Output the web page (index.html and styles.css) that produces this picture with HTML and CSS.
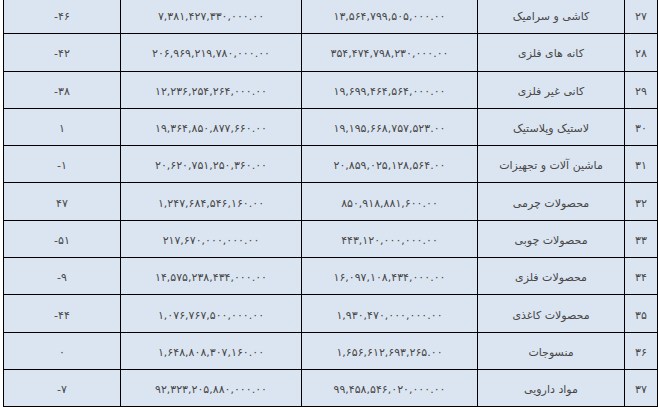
FILE: index.html
```html
<!DOCTYPE html>
<html lang="fa">
<head>
<meta charset="utf-8">
<link rel="stylesheet" href="styles.css">
</head>
<body>
<table class="grid" dir="rtl">
  <colgroup>
    <col class="c-num">
    <col class="c-name">
    <col class="c-v1">
    <col class="c-v2">
    <col class="c-pct">
  </colgroup>
  <tbody>
    <tr><td>۲۷</td><td>کاشی و سرامیک</td><td class="n">۱۳,۵۶۴,۷۹۹,۵۰۵,۰۰۰.۰۰</td><td class="n">۷,۳۸۱,۴۲۷,۳۳۰,۰۰۰.۰۰</td><td class="n">-۴۶</td></tr>
    <tr><td>۲۸</td><td>کانه های فلزی</td><td class="n">۳۵۴,۴۷۴,۷۹۸,۲۳۰,۰۰۰.۰۰</td><td class="n">۲۰۶,۹۶۹,۲۱۹,۷۸۰,۰۰۰.۰۰</td><td class="n">-۴۲</td></tr>
    <tr><td>۲۹</td><td>کانی غیر فلزی</td><td class="n">۱۹,۶۹۹,۴۶۴,۵۶۴,۰۰۰.۰۰</td><td class="n">۱۲,۲۳۶,۲۵۴,۲۶۴,۰۰۰.۰۰</td><td class="n">-۳۸</td></tr>
    <tr><td>۳۰</td><td>لاستیک وپلاستیک</td><td class="n">۱۹,۱۹۵,۶۶۸,۷۵۷,۵۲۳.۰۰</td><td class="n">۱۹,۳۶۴,۸۵۰,۸۷۷,۶۶۰.۰۰</td><td class="n">۱</td></tr>
    <tr><td>۳۱</td><td>ماشین آلات و تجهیزات</td><td class="n">۲۰,۸۵۹,۰۲۵,۱۲۸,۵۶۴.۰۰</td><td class="n">۲۰,۶۲۰,۷۵۱,۲۵۰,۳۶۰.۰۰</td><td class="n">-۱</td></tr>
    <tr><td>۳۲</td><td>محصولات چرمی</td><td class="n">۸۵۰,۹۱۸,۸۸۱,۶۰۰.۰۰</td><td class="n">۱,۲۴۷,۶۸۴,۵۴۶,۱۶۰.۰۰</td><td class="n">۴۷</td></tr>
    <tr><td>۳۳</td><td>محصولات چوبی</td><td class="n">۴۴۳,۱۲۰,۰۰۰,۰۰۰.۰۰</td><td class="n">۲۱۷,۶۷۰,۰۰۰,۰۰۰.۰۰</td><td class="n">-۵۱</td></tr>
    <tr><td>۳۴</td><td>محصولات فلزی</td><td class="n">۱۶,۰۹۷,۱۰۸,۴۳۴,۰۰۰.۰۰</td><td class="n">۱۴,۵۷۵,۲۳۸,۴۳۴,۰۰۰.۰۰</td><td class="n">-۹</td></tr>
    <tr><td>۳۵</td><td>محصولات کاغذی</td><td class="n">۱,۹۳۰,۴۷۰,۰۰۰,۰۰۰.۰۰</td><td class="n">۱,۰۷۶,۷۶۷,۵۰۰,۰۰۰.۰۰</td><td class="n">-۴۴</td></tr>
    <tr><td>۳۶</td><td>منسوجات</td><td class="n">۱,۶۵۶,۶۱۲,۶۹۳,۲۶۵.۰۰</td><td class="n">۱,۶۴۸,۸۰۸,۳۰۷,۱۶۰.۰۰</td><td class="n">۰</td></tr>
    <tr><td>۳۷</td><td>مواد دارویی</td><td class="n">۹۹,۴۵۸,۵۴۶,۰۲۰,۰۰۰.۰۰</td><td class="n">۹۲,۳۲۳,۲۰۵,۸۸۰,۰۰۰.۰۰</td><td class="n">-۷</td></tr>
  </tbody>
</table>
</body>
</html>
```

FILE: styles.css
```css
html, body {
  margin: 0;
  padding: 0;
  background: #ffffff;
  overflow: hidden;
}

.grid {
  margin: -4px 0 0 3px;
  width: 654px;
  border-collapse: collapse;
  table-layout: fixed;
  background: #dbe5f1;
  font-family: "DejaVu Sans", sans-serif;
  font-size: 11px;
  color: #474747;
}

.c-num { width: 33px; }
.c-name { width: 147px; }
.c-v1 { width: 176px; }
.c-v2 { width: 181px; }
.c-pct { width: 117px; }

.grid tr {
  height: 37.3px;
}

.grid td {
  border: 1px solid #000000;
  text-align: center;
  vertical-align: middle;
  padding: 3px 0 0 0;
  white-space: nowrap;
  overflow: hidden;
}

.grid td.n {
  direction: ltr;
}
```
